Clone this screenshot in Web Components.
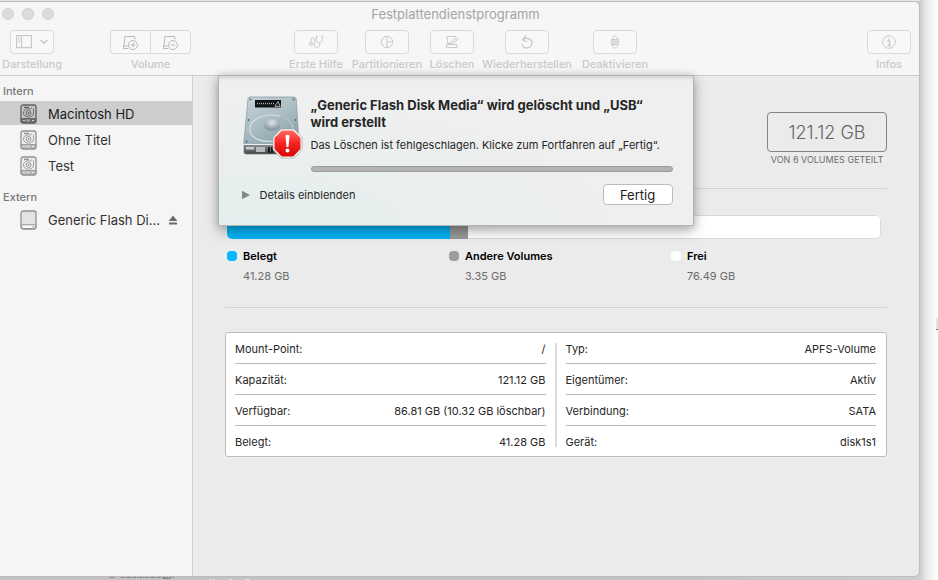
<!DOCTYPE html>
<html lang="de">
<head>
<meta charset="utf-8">
<title>Festplattendienstprogramm</title>
<style>
html, body { margin: 0; height: 100%; }
body { font-family: Inter, "Liberation Sans", sans-serif; font-size: 11px; line-height: 16px; color: #262626; background: #fff; overflow: hidden; }
</style>
</head>
<body>
<disk-utility></disk-utility>
<script>
const define = (name, html, setup) => customElements.define(name, class extends HTMLElement {
  constructor() {
    super();
    this.attachShadow({ mode: "open" });
  }
  connectedCallback() {
    if (this.shadowRoot.childNodes.length) return;
    const t = document.createElement("template");
    t.innerHTML = typeof html === "function" ? html(this) : html;
    this.shadowRoot.append(t.content.cloneNode(true));
    if (setup) setup(this);
  }
});

const hdd = `<g stroke="none"><rect x="1" y="1" width="15" height="18" rx="2" fill="var(--fill)" stroke="var(--line)" stroke-width="1.300"/><path d="M1 14.500h15v2.300a2 2 0 0 1-2 2H3a2 2 0 0 1-2-2z" fill="var(--base)" stroke="var(--line)" stroke-width=".8"/><path d="M4 3.500h5" stroke="var(--line)" stroke-width="1.500"/><path d="M12 3.800l-2 1.200c-4-.3-6.500 1.200-6.500 4 0 2.700 2.300 4.200 5 4.200s5-1.600 5-4.200V4.500" stroke="var(--line)" stroke-width=".8"/><circle cx="8.500" cy="9" r="2.500" stroke="var(--line)" stroke-width=".9"/><circle cx="8.500" cy="9" r=".9" fill="var(--line)"/><path d="M3 16.500h2M7 15.500v2M9 15.500v2M12 16.500h2" stroke="var(--tick)"/></g>`;
const drive = `<path d="M6.500 14.500H1.500L3 2.500h9.500l.5 3" /><path d="M1.500 12h4.500"/><circle cx="11" cy="11" r="4.500"/>`;
const icons = {
  sidebar: [32, 14, `<g stroke-width="1.2"><rect x=".6" y=".6" width="14.800" height="12"/><path d="M5.500 1v11.500"/><path d="M2 3h2M2 5h2M2 7h2" stroke-width="1"/><path d="M24.500 5l3.500 3.300L31.500 5" stroke-width="1.500"/></g>`],
  add: [17, 17, drive + `<path d="M8.800 11h4.400M11 8.800v4.400"/>`],
  remove: [17, 17, drive + `<path d="M8.800 11h4.400"/>`],
  aid: [16, 16, `<path d="M3 8.500V6c0-3 3.700-3 3.700 0v5c0 4 4.800 4 4.800-.5V9M9.500 2H8.300v3.500C8.300 7.500 9.800 9 11.300 9s3-1.500 3-3.500V2h-1.200"/><circle cx="2.800" cy="10" r="1.500"/><path d="M4.800 8.700v2.500"/>`],
  partition: [14, 14, `<circle cx="7" cy="7" r="5.700"/><path d="M7 1.300v11.400M7 7h5.700"/>`],
  erase: [14, 14, `<path d="M2.500 8 2 1.500h9M1.500 9.500h10.500v3H1.500zM5 7.700l6.500-5 1.400 1.600L7 8.800H2.500z"/>`],
  restore: [14, 16, `<path d="M3 5.500c4-2.500 9-.5 9 3.500 0 3-2.300 5-5 5s-4.500-1.500-4.900-4M6 1.500 2.500 5.700 7 8" stroke-width="1.300"/>`],
  unmount: [10, 16, `<path d="M1.200 5.500 5 1.500l3.800 4zM1.200 10.500l3.800 4 3.800-4z"/><path d="M.5 7.200h9M.5 9h9" stroke-width="1.200"/>`],
  info: [16, 16, `<circle cx="8" cy="8" r="6.300"/><path d="M8 4.200v1.500M6.500 7h2v4.500M6.300 11.500h3.600" stroke-width="1.400"/>`],
  hdd: [17, 20, hdd],
  usb: [17, 20, `<rect x="1" y="1" width="15" height="18" rx="2.200" fill="#e3e3e3" stroke="#909090" stroke-width="1.300"/><path d="M1.500 14.800h14v1.700a2 2 0 0 1-2 2h-10a2 2 0 0 1-2-2z" fill="#fbfbfb" stroke="#929292"/><path d="M12.500 16.700h1.300" stroke="#777"/>`],
  eject: [10, 10, `<path d="M5 .5 9.300 6H.700z" fill="#6a6a6a" stroke="none"/><path d="M1 8.500h8" stroke="#6a6a6a" stroke-width="1.800"/>`],
  triangle: [8, 10, `<path d="M0 .7v8.600L8 5z" fill="#858789" stroke="none"/>`],
  failed: [62, 66, `<defs><linearGradient id="m" x1="0" y1="0" x2=".6" y2="1"><stop stop-color="#c5d3da"/><stop offset=".5" stop-color="#aebfc6"/><stop offset="1" stop-color="#8fa4ac"/></linearGradient><linearGradient id="f" x1="0" y1="0" x2="0" y2="1"><stop stop-color="#899091"/><stop offset="1" stop-color="#424646"/></linearGradient><linearGradient id="r" x1="0" y1="0" x2="0" y2="1"><stop stop-color="#ff6b62"/><stop offset=".5" stop-color="#f4231f"/><stop offset="1" stop-color="#d40808"/></linearGradient><radialGradient id="h" cx=".5" cy=".3" r=".7"><stop stop-color="#e0e6e9"/><stop offset="1" stop-color="#80939c"/></radialGradient></defs>
    <g stroke="none"><path d="M2 50h54v7q0 2-2 2H4q-2 0-2-2z" fill="url(#f)" stroke="#666e70" stroke-width=".6"/><path d="M4 52h8v2.500H4z" fill="#c8cccc"/><path d="M14 52h9v5h-9z" fill="#b4babb"/><path d="M27 52v6M30 52v6" stroke="#000" stroke-width="1.500"/>
    <path d="M8 2h44q2 0 2.200 2L57 48q0 2-2 2H3.500q-2 0-1.700-2L6 4q0-2 2-2z" fill="url(#m)" stroke="#82969d" stroke-width=".7"/><path d="M2 49.500h54" stroke="#e9efef"/>
    <path d="M34 46C17 48 7 42 8 33c1-8 10-13 21-13 14 0 22 7 22 16" stroke="#d5dfe3" stroke-width="1.200"/><path d="M38 21q12 4 12.500 14" stroke="#91a5ae" stroke-width=".8"/>
    <ellipse cx="30" cy="31.500" rx="8" ry="4.500" fill="#768a94" opacity=".4"/><ellipse cx="30" cy="29.500" rx="7.500" ry="5.500" fill="url(#h)"/>
    <path d="M13 5h26v7.500H13z" fill="#101314"/><path d="M15 8.500h17" stroke="#aab1b3" stroke-width="1.500" stroke-dasharray="1 1"/><path d="M33 11.300 36 6.500l2.200 4.800z" stroke="#d4d9da" stroke-width=".8"/>
    <g fill="#516a75"><circle cx="8.500" cy="4.500" r="1"/><circle cx="51.500" cy="4.500" r="1"/><circle cx="6.500" cy="25" r="1"/><circle cx="53.500" cy="25" r="1"/><circle cx="4.500" cy="46.500" r="1"/></g>
    <path d="M39 34h13l8 8.500v12L52 63H39l-8-8.500v-12z" fill="#fff" stroke="#9b9b9b" stroke-width=".7"/><path d="M39.700 35.500h11.600l7.200 7.600v10.800l-7.200 7.600H39.700l-7.200-7.600V43.100z" fill="url(#r)"/><path d="M43.500 40.500q2-1.500 4 0l-1 11.500h-2z" fill="#fff"/><circle cx="45.500" cy="55.500" r="2" fill="#fff"/></g>`]
};

define("ui-icon", el => {
  const [w, h, body] = icons[el.getAttribute("name")];
  return `<style>:host{display:block;flex:none;--fill:#ececec;--line:#929292;--base:#b4b4b4;--tick:#eee}:host([dark]){--fill:#c4c4c4;--line:#606060;--base:#6c6c6c;--tick:#d0d0d0}svg{display:block}</style>
  <svg width="${w}" height="${h}" viewBox="0 0 ${w} ${h}" fill="none" stroke="currentColor" aria-hidden="true">${body}</svg>`;
});

define("tool-item", el => {
  const names = el.getAttribute("icons").split(" ");
  return `<style>
    :host{display:flex;flex-direction:column;align-items:center;gap:2px;color:#c9c9c9}
    div{display:flex}
    button{box-sizing:border-box;width:44px;height:24px;padding:0;border:1px solid #dadada;border-radius:4px;background:#f8f8f8;color:#c9c9c9;display:flex;align-items:center;justify-content:center}
    .pair button{width:41px;color:#b9b9b9}
    .pair button:first-child{width:40px;border-right:0;border-radius:4px 0 0 4px}
    .pair button:last-child{border-radius:0 4px 4px 0}
    label{white-space:nowrap;font-weight:500}
  </style>
  <div class="${names.length > 1 ? "pair" : ""}">${names.map((n, i) => `<button id="b${i}" disabled><ui-icon name="${n}"></ui-icon></button>`).join("")}</div>
  <label for="b0"><slot></slot></label>`;
});

define("tool-bar", `<style>
  :host{display:block;flex:none;box-sizing:border-box;height:74px;background:#f6f6f6;border-bottom:1px solid #cbcbcb}
  header{display:grid;grid-template-columns:1fr auto 1fr;align-items:center;height:23px;padding-right:8px}
  .lights{display:flex;gap:8px;padding-left:2px}
  i{box-sizing:border-box;width:12px;height:12px;border-radius:50%;background:#dcdcdc;border:1px solid #cecece}
  h1{margin:0;font-size:13px;font-weight:400;color:#a5a5a5}
  nav{display:flex;gap:8px;padding:5px 8px 0 2px}
  .view{width:60px;margin-right:40px}.volume{width:81px;margin-right:89px}.aid{width:56px}.part{width:70px}.erase{width:44px}.restore{width:90px}.eject{width:70px}.info{margin-left:auto}
</style>
<header><span class="lights"><i></i><i></i><i></i></span><h1>Festplattendienstprogramm</h1></header>
<nav>
  <tool-item class="view" icons="sidebar">Darstellung</tool-item>
  <tool-item class="volume" icons="add remove">Volume</tool-item>
  <tool-item class="aid" icons="aid">Erste Hilfe</tool-item>
  <tool-item class="part" icons="partition">Partitionieren</tool-item>
  <tool-item class="erase" icons="erase">Löschen</tool-item>
  <tool-item class="restore" icons="restore">Wiederherstellen</tool-item>
  <tool-item class="eject" icons="unmount">Deaktivieren</tool-item>
  <tool-item class="info" icons="info">Infos</tool-item>
</nav>`);

define("side-item", el => `<style>
  :host{display:flex;align-items:center;box-sizing:border-box;height:24px;margin-bottom:2px;padding:1px 14px 0 20px;font-size:13px;color:#333}
  :host([selected]){background:#cdcdcd;color:#1c1c1c}
  span{flex:1;min-width:0;padding-left:11px;white-space:nowrap}
  button{border:0;background:none;padding:0}
</style><ui-icon name="${el.getAttribute("icon")}" ${el.hasAttribute("selected") ? "dark" : ""}></ui-icon><span><slot></slot></span>${el.hasAttribute("ejectable") ? `<button aria-label="Auswerfen"><ui-icon name="eject"></ui-icon></button>` : ""}`);

define("side-bar", `<style>
  :host{display:block;box-sizing:border-box;width:193px;flex:none;padding-top:7px;background:#f5f5f5;border-right:1px solid #d0d0d0}
  h2{margin:0 0 2px 3px;font-size:11px;font-weight:500;line-height:16px;color:#777}
  h2.ext{margin-top:12px}
</style>
<h2>Intern</h2>
<side-item icon="hdd" selected>Macintosh HD</side-item>
<side-item icon="hdd">Ohne Titel</side-item>
<side-item icon="hdd">Test</side-item>
<h2 class="ext">Extern</h2>
<side-item icon="usb" ejectable>Generic Flash Di...</side-item>`);

define("capacity-badge", `<style>
  :host{display:block;width:120px;text-align:center}
  div{box-sizing:border-box;height:40px;border:1px solid #858585;border-radius:4px;font-size:18px;font-weight:300;line-height:40px;color:#666}
  p{margin:0;font-size:9px;line-height:16px;color:#6c6c6c;white-space:nowrap}
</style><div>121.12 GB</div><p>VON 6 VOLUMES GETEILT</p>`);

define("usage-bar", `<style>
  :host{display:flex;box-sizing:border-box;height:24px;margin:0 6px 0 2px;border-radius:5px;overflow:hidden;background:#fff}
  .used{flex:4128;background:#00b4f5}.other{flex:335;background:#999}.free{flex:7649;border:1px solid #d9d9d9;border-left:0;border-radius:0 5px 5px 0}
</style><div class="used"></div><div class="other"></div><div class="free"></div>`);

define("legend-item", el => `<style>
  :host{display:grid;grid-template-columns:10px 1fr;column-gap:6px;row-gap:4px;align-items:center}
  i{width:10px;height:10px;border-radius:4px;background:${el.getAttribute("color")}}
  b{font-weight:600;color:#000}
  span{grid-column:2;color:#6c6c6c}
</style><i></i><b><slot></slot></b><span>${el.getAttribute("value")}</span>`);

define("info-table", el => `<style>
  :host{display:block;flex:1}
  table{width:100%;border-collapse:separate;border-spacing:0}
  th,td{box-sizing:border-box;height:31px;padding:1px 1px 0 0;border-bottom:1px solid #b9b9b9;font-weight:400;text-align:left;white-space:nowrap}
  td{text-align:right;padding-right:0}
  tr:last-child>*{height:30px;border:0}
</style><table>${el.dataset.rows.split(";").map(r => { const [k, v] = r.split("|"); return `<tr><th scope="row">${k}:</th><td>${v}</td></tr>`; }).join("")}</table>`);

define("volume-pane", `<style>
  :host{display:block;flex:1;min-width:0;box-sizing:border-box;padding:36px 32px 0;background:#ebebeb}
  capacity-badge{margin-left:auto}
  hr{margin:0;border:0;border-top:1px solid #d1d1d1}
  .first{margin:20px 0 26px}
  .legend{display:grid;grid-template-columns:repeat(3,222px);padding:9px 2px 0}
  .second{margin:23px 0 24px}
  .box{display:flex;gap:9px;box-sizing:border-box;padding:0 10px 0 9px;border:1px solid #bdbdbd;border-radius:3px;background:#fff}
  .rule{width:2px;margin:10px 0 9px;background:#dcdcdc}
</style>
<capacity-badge></capacity-badge>
<hr class="first">
<usage-bar></usage-bar>
<div class="legend">
  <legend-item color="#00b9fc" value="41.28 GB">Belegt</legend-item>
  <legend-item color="#9c9c9c" value="3.35 GB">Andere Volumes</legend-item>
  <legend-item color="#fff" value="76.49 GB">Frei</legend-item>
</div>
<hr class="second">
<div class="box">
  <info-table data-rows="Mount-Point|/;Kapazität|121.12 GB;Verfügbar|86.81 GB (10.32 GB löschbar);Belegt|41.28 GB"></info-table>
  <div class="rule"></div>
  <info-table data-rows="Typ|APFS-Volume;Eigentümer|Aktiv;Verbindung|SATA;Gerät|disk1s1"></info-table>
</div>`);

define("alert-sheet", `<style>
  :host{display:block;box-sizing:border-box;width:476px;padding:19px 20px 20px 23px;background:radial-gradient(ellipse at 8% 100%,#e3efee 0,#e9efee 28%,#efefef 62%);border:1px solid #b4b4b4;box-shadow:0 5px 12px rgba(0,0,0,.3),0 0 8px rgba(0,0,0,.12),inset 0 4px 4px -3px rgba(0,0,0,.18)}
  .top{display:flex;gap:7px}
  .text{flex:1;min-width:0;padding-top:2px}
  h2{margin:0;font-size:13px;line-height:17px;font-weight:700}
  p{margin:7px 0 0;line-height:14px;white-space:nowrap}
  progress{display:block;width:100%;height:6px;margin-top:14px;appearance:none;border:0;background:none}
  progress::-webkit-progress-bar{box-sizing:border-box;border:1px solid #9b9b9b;border-radius:3px;background:#b4b4b4}
  progress::-webkit-progress-value{background:transparent}
  .bottom{display:flex;align-items:center;justify-content:space-between;padding-top:12px}
  button{font:inherit;color:#262626}
  .more{display:flex;align-items:center;gap:10px;padding:0;border:0;background:none}
  .done{box-sizing:border-box;width:70px;height:21px;padding:0;border:1px solid #bdbdbd;border-radius:4px;background:#fff;font-size:13px;line-height:18px;color:#222}
</style>
<div class="top">
  <ui-icon name="failed"></ui-icon>
  <div class="text">
    <h2>„Generic Flash Disk Media“ wird gelöscht und „USB“<br>wird erstellt</h2>
    <p>Das Löschen ist fehlgeschlagen. Klicke zum Fortfahren auf „Fertig“.</p>
    <progress value="0" max="100" aria-label="Fortschritt"></progress>
  </div>
</div>
<div class="bottom">
  <button class="more" aria-expanded="false"><ui-icon name="triangle"></ui-icon>Details einblenden</button>
  <button class="done">Fertig</button>
</div>`, el => { el.setAttribute("role", "alertdialog"); });

define("disk-utility", `<style>
  :host{display:flex;box-sizing:border-box;height:100vh;padding:1px 18px 3px 0;background:linear-gradient(#e6e6e6,#e6e6e6) 0 0/calc(100% - 18px) 1px no-repeat,linear-gradient(90deg,#cdcdcd,#e4e4e4 5px,#f3f3f3 11px,#fff) 100% 0/18px 100% no-repeat,linear-gradient(90deg,#c2c2c2 70%,#cdcdcd);position:relative}
  main{position:relative;flex:1;min-width:0;display:flex;flex-direction:column;border:1px solid #bcbcbc;border-left:0;border-radius:0 6px 6px 0;overflow:hidden;background:#ebebeb}
  .body{flex:1;display:flex;min-height:0}
  alert-sheet{position:absolute;top:73px;left:0;right:8px;margin:0 auto}
  .behind{position:absolute;left:105px;bottom:0}
  .edge{position:absolute;right:0;top:318px;width:2px;height:11px;background:#e2e2e2;border-bottom:1px solid #777}
</style>
<svg class="behind" width="160" height="4" viewBox="0 0 160 4" aria-hidden="true"><path d="M4 0h6q0 2-3 2t-3-2" fill="#b05cb0"/><path d="M16 1.500h54" stroke="#808080" stroke-dasharray="3 1 1 1"/><path d="M58 2.500h7" stroke="#888"/><path d="M104 3.500h3M108 3.500h2M124 3.500h3M140 3.500h5" stroke="#e2e2e2"/></svg>
<span class="edge"></span>
<main>
  <tool-bar></tool-bar>
  <div class="body"><side-bar></side-bar><volume-pane></volume-pane></div>
  <alert-sheet></alert-sheet>
</main>`);
</script>
</body>
</html>
